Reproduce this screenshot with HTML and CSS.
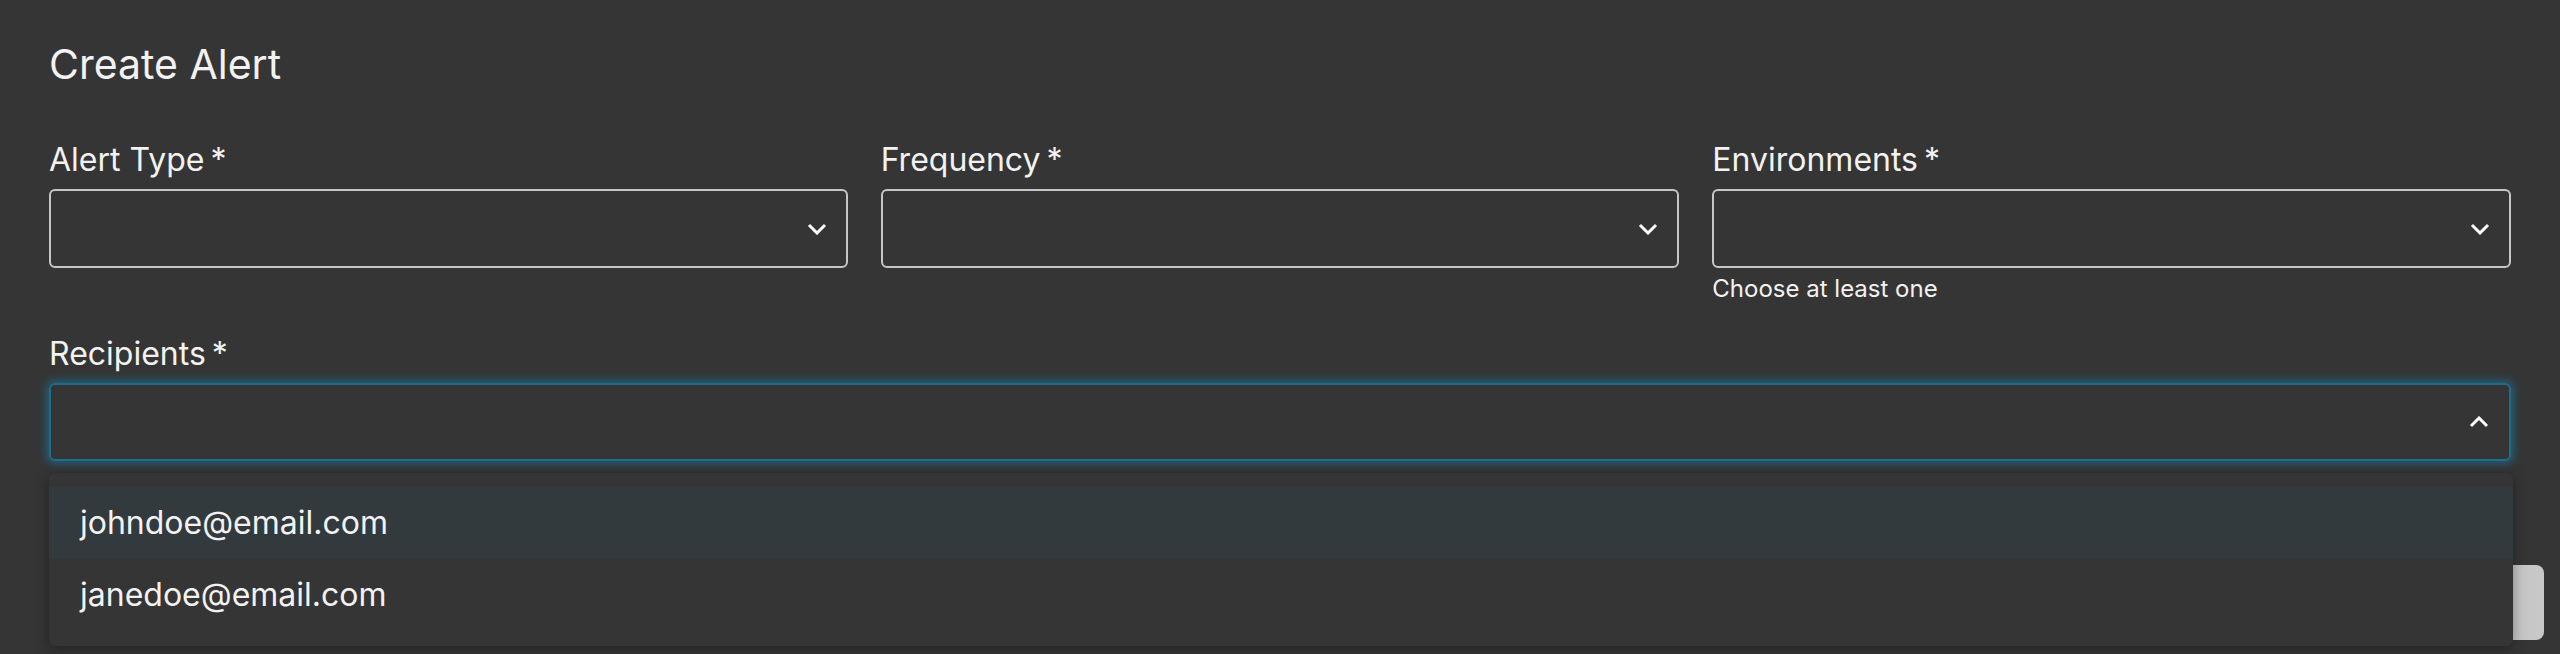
FILE: index.html
```html
<!DOCTYPE html>
<html lang="en">
<head>
<meta charset="utf-8">
<title>Create Alert</title>
<link rel="stylesheet" href="styles.css">
</head>
<body>
<div class="card">
  <h1 class="title">Create Alert</h1>
  <div class="row">
    <div class="field">
      <label class="label">Alert Type<span class="req">*</span></label>
      <div class="select">
        <svg class="chev" width="20" height="12" viewBox="0 0 20 12"><path d="M2 2 L10 10 L18 2" fill="none" stroke="#fff" stroke-width="3"/></svg>
      </div>
    </div>
    <div class="field">
      <label class="label">Frequency<span class="req">*</span></label>
      <div class="select">
        <svg class="chev" width="20" height="12" viewBox="0 0 20 12"><path d="M2 2 L10 10 L18 2" fill="none" stroke="#fff" stroke-width="3"/></svg>
      </div>
    </div>
    <div class="field">
      <label class="label">Environments<span class="req">*</span></label>
      <div class="select">
        <svg class="chev" width="20" height="12" viewBox="0 0 20 12"><path d="M2 2 L10 10 L18 2" fill="none" stroke="#fff" stroke-width="3"/></svg>
      </div>
      <div class="helper">Choose at least one</div>
    </div>
  </div>
  <div class="field wide">
    <label class="label">Recipients<span class="req">*</span></label>
    <div class="select focused">
      <svg class="chev" width="20" height="12" viewBox="0 0 20 12"><path d="M2 10 L10 2 L18 10" fill="none" stroke="#fff" stroke-width="3"/></svg>
    </div>
    <div class="menu-wrap">
      <div class="thumb"></div>
      <ul class="menu">
        <li class="item active">johndoe@email.com</li>
        <li class="item">janedoe@email.com</li>
      </ul>
    </div>
  </div>
</div>
</body>
</html>
```
FILE: styles.css
```css
* { box-sizing: border-box; }
html, body {
  margin: 0;
  padding: 0;
  background: #353535;
  height: 654px;
  overflow: hidden;
}
body {
  font-family: Inter, "Liberation Sans", sans-serif;
  color: #f2f2f2;
}
.card {
  padding: 40px 49px 0 49px;
  background: #353535;
  border-radius: 8px;
  height: 654px;
}
.title {
  margin: 0;
  font-size: 41px;
  line-height: 48px;
  font-weight: 400;
}
.row {
  display: grid;
  grid-template-columns: 1fr 1fr 1fr;
  column-gap: 33px;
  margin-top: 52px;
  height: 194px;
}
.field {
  display: flex;
  flex-direction: column;
}
.label {
  font-size: 32px;
  line-height: 40px;
  font-weight: 400;
  margin-bottom: 9px;
}
.req { margin-left: 6px; }
.select {
  height: 79px;
  border: 2px solid #c6c6c6;
  border-radius: 6px;
  display: flex;
  align-items: center;
  justify-content: flex-end;
  padding-right: 19px;
}
.chev { display: block; }
.helper {
  font-size: 24px;
  line-height: 28px;
  margin-top: 7px;
}
.wide .select.focused {
  height: 78px;
  border: 2px solid #1e6d8d;
  box-shadow: 0 0 8px 3px rgba(28, 112, 148, 0.7);
  padding-right: 20px;
}
.menu-wrap {
  position: relative;
  margin-top: 12px;
}
.thumb {
  position: absolute;
  right: -33px;
  top: 92px;
  width: 46px;
  height: 75px;
  border-radius: 8px;
  background: linear-gradient(to right, #a8a8a8, #c6c6c6 30%, #c8c8c8);
}
.menu {
  position: relative;
  list-style: none;
  margin: 0;
  padding: 14px 0 15px 0;
  background: #353535;
  border-radius: 6px;
  box-shadow: 0 3px 14px rgba(0, 0, 0, 0.35);
  margin-right: -2px;
}
.item {
  height: 72px;
  line-height: 72px;
  font-size: 32px;
  padding-left: 31px;
}
.item.active {
  background: #323a3e;
}
```
